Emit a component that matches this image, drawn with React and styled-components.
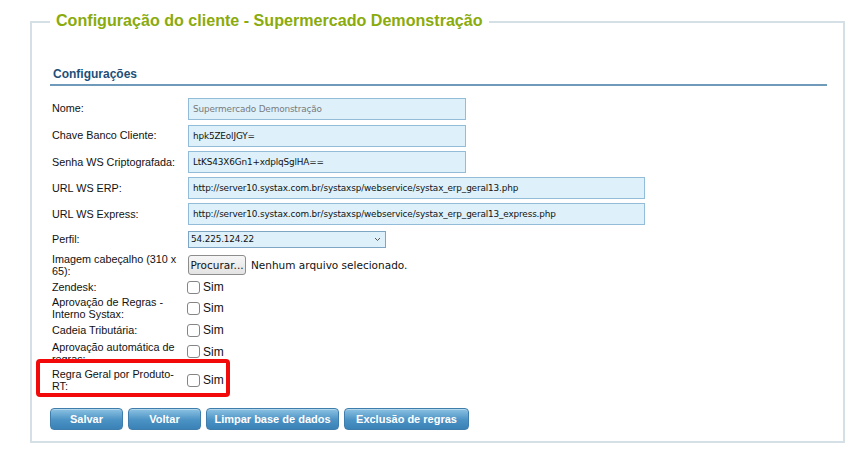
import React from 'react'
import styled, { createGlobalStyle } from 'styled-components'

const Global = createGlobalStyle`
  html, body { margin: 0; padding: 0; background: #fff; }
  body { font-family: "Liberation Sans", Arial, sans-serif; }
`

const Page = styled.div`
  width: 856px;
  height: 452px;
  box-sizing: border-box;
  padding: 10px 12px 0 30px;
  position: relative;
`

const Fieldset = styled.fieldset`
  margin: 0;
  width: 815px;
  box-sizing: border-box;
  border: 2px solid #d5dfe6;
  padding: 18px 16px 11px 18px;
  min-width: 0;
`

const Legend = styled.legend`
  padding: 0 6px 4px;
  font-size: 16.1px;
  font-weight: bold;
  color: #8aab0c;
  line-height: 20px;
`

const Section = styled.h3`
  margin: 15px 0 0;
  padding: 0 0 2px 3px;
  font-size: 12px;
  font-weight: bold;
  color: #1d4f79;
  border-bottom: 2px solid #6f9ab9;
  line-height: 15px;
`

const Rows = styled.div`
  display: flex;
  flex-direction: column;
  padding: 9px 0 0 2px;
`

const Row = styled.div`
  display: grid;
  grid-template-columns: 136px 1fr;
  align-items: center;
  height: ${p => p.$h}px;
  overflow: hidden;
`

const Label = styled.div`
  font-size: 10.8px;
  color: #111;
  line-height: 12.5px;
  max-height: ${p => p.$clip ? '20px' : 'none'};
  margin-top: ${p => p.$clip ? '-2px' : '0'};
  overflow: hidden;
  padding-right: 6px;
`

const Input = styled.div`
  width: ${p => p.$w}px;
  height: 22px;
  box-sizing: border-box;
  background: #def1fb;
  border: 1px solid #93bcd8;
  font-family: "DejaVu Sans", Verdana, sans-serif;
  font-size: 8.9px;
  letter-spacing: -0.15px;
  color: ${p => p.$muted ? '#7a7a7a' : '#111'};
  display: flex;
  align-items: center;
  padding-left: 4px;
  white-space: nowrap;
`

const Select = styled.div`
  width: 198px;
  height: 17px;
  box-sizing: border-box;
  background: #def1fb;
  border: 1px solid #7ea5c4;
  font-family: "DejaVu Sans", Verdana, sans-serif;
  font-size: 8.9px;
  letter-spacing: -0.15px;
  color: #111;
  display: flex;
  align-items: center;
  justify-content: space-between;
  padding: 0 4px 0 2px;
`

const FileLine = styled.div`
  display: flex;
  align-items: center;
  gap: 5px;
  font-family: "DejaVu Sans", sans-serif;
  font-size: 10.5px;
  color: #111;
  white-space: nowrap;
`

const FileButton = styled.span`
  display: inline-block;
  width: 58px;
  height: 20px;
  line-height: 18px;
  box-sizing: border-box;
  text-align: center;
  border: 1px solid #8d8d8d;
  border-radius: 3px;
  background: linear-gradient(#f6f6f6, #e3e3e3);
`

const Check = styled.label`
  display: flex;
  align-items: center;
  gap: 3px;
  margin-left: -1px;
  font-size: 12px;
  color: #111;
`

const Box = styled.span`
  flex-shrink: 0;
  width: 13px;
  height: 13px;
  box-sizing: border-box;
  border: 1px solid #858585;
  border-radius: 3px;
  background: #fff;
`

const Buttons = styled.div`
  display: flex;
  gap: 5px;
  margin-top: 12px;
`

const Button = styled.button`
  height: 22px;
  width: ${p => p.$w}px;
  padding: 0;
  border: 1px solid #3f7eac;
  border-radius: 4px;
  background: linear-gradient(#8cc2e3, #4b92c4 55%, #3a82b7);
  color: #fff;
  font-family: "Liberation Sans", Arial, sans-serif;
  font-size: 11px;
  font-weight: bold;
  box-shadow: inset 0 1px 0 rgba(255,255,255,.35);
`

const Highlight = styled.div`
  position: absolute;
  left: 36px;
  top: 359px;
  width: 194px;
  height: 38px;
  box-sizing: border-box;
  border: 4px solid #f20a0a;
  border-radius: 4px;
  pointer-events: none;
`

const Chevron = () => (
  <svg width="7" height="5" viewBox="0 0 7 5">
    <path d="M1 1l2.5 2.5L6 1" fill="none" stroke="#555" strokeWidth="1" />
  </svg>
)

const texts = [
  ['Nome:', 'Supermercado Demonstração', 278, true, 27],
  ['Chave Banco Cliente:', 'hpk5ZEolJGY=', 278, false, 27],
  ['Senha WS Criptografada:', 'LtKS43X6Gn1+xdplqSglHA==', 278, false, 26],
  ['URL WS ERP:', 'http://server10.systax.com.br/systaxsp/webservice/systax_erp_geral13.php', 457, false, 26],
  ['URL WS Express:', 'http://server10.systax.com.br/systaxsp/webservice/systax_erp_geral13_express.php', 457, false, 26],
]

const checks = [
  ['Zendesk:', 16, false],
  ['Aprovação de Regras - Interno Systax:', 26, false],
  ['Cadeia Tributária:', 18, false],
  ['Aprovação automática de regras:', 25, true],
  ['Regra Geral por Produto-RT:', 32, false],
]

export default function App() {
  return (
    <Page>
      <Global />
      <Fieldset>
        <Legend>Configuração do cliente - Supermercado Demonstração</Legend>
        <Section>Configurações</Section>
        <Rows>
          {texts.map(([label, value, w, muted, h]) => (
            <Row key={label} $h={h}>
              <Label>{label}</Label>
              <Input $w={w} $muted={muted}>{value}</Input>
            </Row>
          ))}
          <Row $h={24}>
            <Label>Perfil:</Label>
            <Select>54.225.124.22<Chevron /></Select>
          </Row>
          <Row $h={28}>
            <Label>Imagem cabeçalho (310 x 65):</Label>
            <FileLine>
              <FileButton>Procurar...</FileButton>
              Nenhum arquivo selecionado.
            </FileLine>
          </Row>
          {checks.map(([label, h, clip]) => (
            <Row key={label} $h={h}>
              <Label $clip={clip}>{label}</Label>
              <Check><Box />Sim</Check>
            </Row>
          ))}
        </Rows>
        <Buttons>
          <Button $w={73}>Salvar</Button>
          <Button $w={73}>Voltar</Button>
          <Button $w={133}>Limpar base de dados</Button>
          <Button $w={125}>Exclusão de regras</Button>
        </Buttons>
      </Fieldset>
      <Highlight />
    </Page>
  )
}
